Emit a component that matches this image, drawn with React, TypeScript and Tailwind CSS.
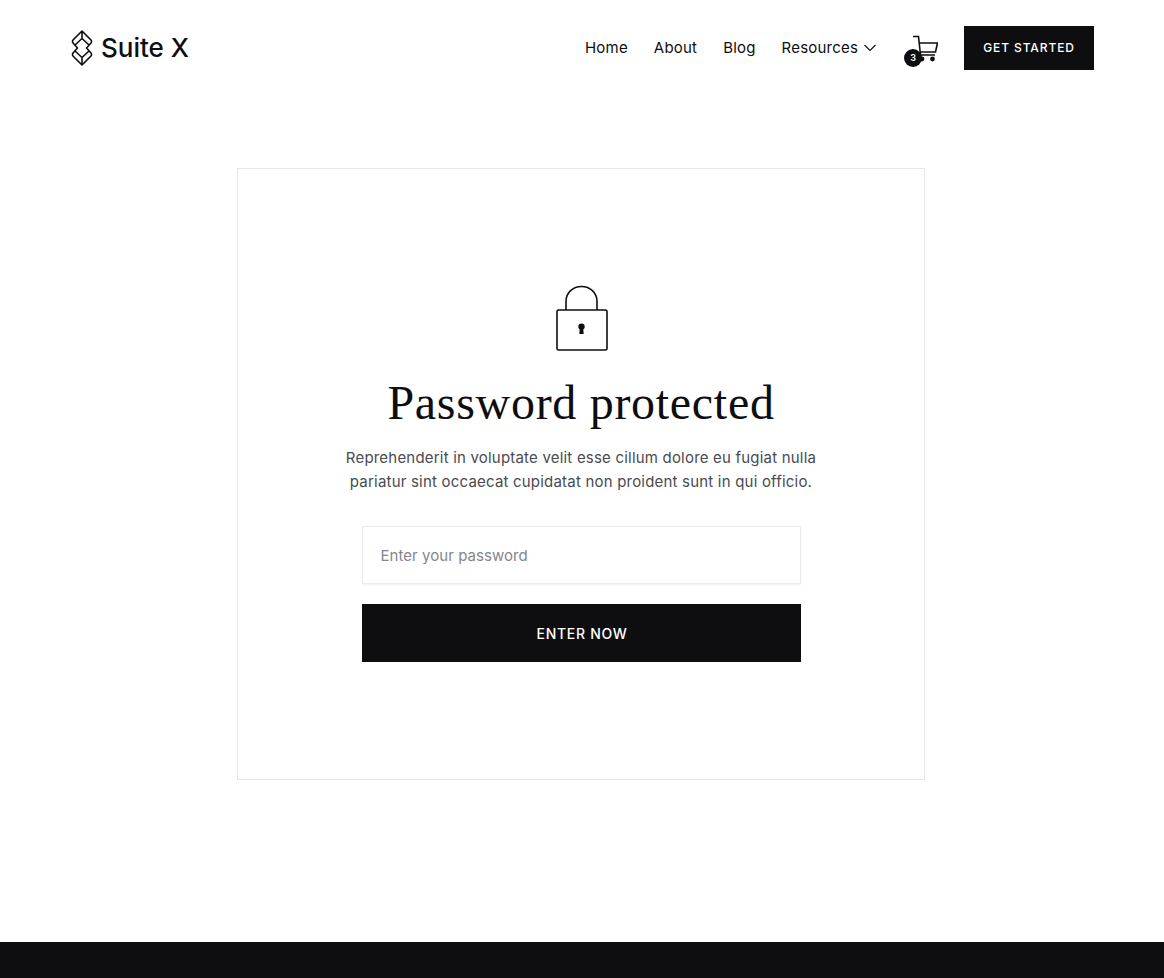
import React from "react";

const sans = "font-['Inter','Open_Sans',sans-serif]";

function Logo() {
  return (
    <svg width="22" height="36" viewBox="0 0 22 36" fill="none" stroke="#0e0e10" strokeWidth="1.6" strokeLinejoin="round">
      <path d="M11 1 L20 10 Q21 11.5 20 13 L15.5 18 L20 23 Q21 24.5 20 26 L11 35 L2 26 Q1 24.5 2 23 L6.5 18 L2 13 Q1 11.5 2 10 Z" />
      <path d="M11 1 V8.5 L4 15 M11 8.5 L18 15" />
      <path d="M4 21 L11 27.5 V35 M18 21 L11 27.5" />
    </svg>
  );
}

function Cart() {
  return (
    <div className="relative w-[34px] h-[30px]">
      <svg width="34" height="30" viewBox="0 0 34 30" fill="none" stroke="#0e0e10" strokeWidth="1.6" className="absolute left-0 top-0">
        <path d="M9 3.5 H14.5 L16.5 22 H31" />
        <path d="M15 10 H33.5 L31.5 19 H16" />
        <circle cx="28.5" cy="26" r="1.6" fill="#0e0e10" />
        <circle cx="18" cy="26" r="1.6" fill="#0e0e10" />
      </svg>
      <span className={`${sans} absolute left-0 top-[16px] w-[18px] h-[18px] rounded-full bg-[#0e0e10] text-white text-[9px] font-semibold flex items-center justify-center`}>
        3
      </span>
    </div>
  );
}

function Lock() {
  return (
    <svg width="52" height="66" viewBox="0 0 52 66" fill="none" stroke="#0e0e10" strokeWidth="1.6" className="ml-[1px]">
      <path d="M10 25 V16.5 C10 7.5 17 1.5 25.5 1.5 C34 1.5 41 7.5 41 16.5 V25" />
      <rect x="1" y="25" width="50" height="40" rx="1.5" />
      <path d="M25.5 38.5 a3.2 3.2 0 0 1 3.2 3.2 c0 1.3 -.8 2.2 -1.4 2.8 l.4 4.5 h-4.4 l.4 -4.5 c-.6 -.6 -1.4 -1.5 -1.4 -2.8 a3.2 3.2 0 0 1 3.2 -3.2 z" fill="#0e0e10" stroke="none" />
    </svg>
  );
}

export default function App() {
  const links = ["Home", "About", "Blog"];

  return (
    <div className={`${sans} min-h-[978px] bg-white text-[#0e0e10] flex flex-col overflow-hidden`}>
      <header className="h-[95px] pl-[71px] pr-[70px] flex items-center justify-between">
        <a className="flex items-center gap-[8px]">
          <Logo />
          <span className="text-[26px] font-medium leading-none">Suite X</span>
        </a>
        <nav className="flex items-center">
          <ul className="flex items-center gap-[26px] text-[15px] tracking-[0.2px] pt-[1px]">
            {links.map((link) => (
              <li key={link}>{link}</li>
            ))}
            <li className="flex items-center gap-[6px]">
              Resources
              <svg width="12" height="8" viewBox="0 0 12 8" fill="none" stroke="#0e0e10" strokeWidth="1.1">
                <path d="M0.5 1 L6 6.5 L11.5 1" />
              </svg>
            </li>
          </ul>
          <div className="ml-[28px] mr-[26px]">
            <Cart />
          </div>
          <button className="w-[130px] h-[44px] pt-[1px] bg-[#0e0e10] text-white text-[12px] font-medium tracking-[0.075em]">
            GET STARTED
          </button>
        </nav>
      </header>

      <main className="flex justify-center pt-[73px] pr-[2px]">
        <section className="w-[688px] h-[612px] border border-[#e6e6e6] pt-[116px] flex flex-col items-center">
          <Lock />
          <h1 className="mt-[24px] font-['Liberation_Serif',serif] text-[48px] leading-[56px] tracking-[0.7px]">Password protected</h1>
          <p className="mt-[15px] w-[490px] text-center text-[15px] leading-[24px] tracking-[0.2px] text-[#4a4a4f]">
            Reprehenderit in voluptate velit esse cillum dolore eu fugiat nulla pariatur sint occaecat cupidatat non proident sunt in qui officio.
          </p>
          <form className="mt-[32px] w-[439px] flex flex-col gap-[20px]">
            <input
              type="password"
              placeholder="Enter your password"
              className="h-[58px] w-full px-[18px] text-[15px] tracking-[0.05px] border border-[#ebebeb] shadow-[0_1px_2px_rgba(0,0,0,0.06)] outline-none placeholder:text-[#85858d]"
            />
            <button type="button" className="h-[58px] w-full pl-[2px] bg-[#0e0e10] text-white text-[14px] font-medium tracking-[0.05em]">
              ENTER NOW
            </button>
          </form>
        </section>
      </main>

      <footer className="mt-[162px] h-[36px] bg-[#0e0e10]" />
    </div>
  );
}
